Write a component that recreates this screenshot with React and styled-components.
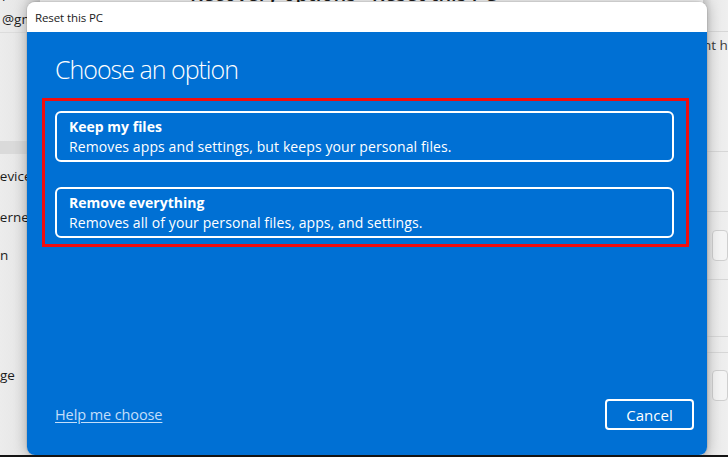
import React from 'react';
import styled, { createGlobalStyle } from 'styled-components';

const GlobalStyle = createGlobalStyle`
  html, body {
    margin: 0;
    padding: 0;
    background: #ededed;
    overflow: hidden;
  }
  body {
    font-family: "Open Sans", "Noto Sans", sans-serif;
  }
`;

const Screen = styled.div`
  position: relative;
  width: 728px;
  height: 457px;
  box-sizing: border-box;
  overflow: hidden;
  background: #ececec;
  border-bottom: 2px solid #141414;
`;

/* settings window that sits behind the dialog */
const Backdrop = styled.div`
  display: grid;
  grid-template-columns: 40px 663px 25px;
  height: 100%;
  color: #1b1b1b;
  font-size: 13.5px;
`;

const Sidebar = styled.div`
  display: flex;
  flex-direction: column;
  background: linear-gradient(90deg, #ececec 0%, #e6e6e6 60%, #cfcfcf 100%);
`;

const SideItem = styled.div`
  height: ${(p) => p.$h}px;
  display: flex;
  align-items: ${(p) => (p.$cut ? 'flex-end' : 'center')};
  overflow: hidden;
  white-space: nowrap;
  line-height: 20px;
  padding-left: 2px;
  background: ${(p) => (p.$active ? '#dadada' : 'transparent')};
  border-top: ${(p) => (p.$line ? '1px solid #dcdcdc' : 'none')};
`;

const SideLabel = styled.span`
  margin-left: ${(p) => p.$shift || 0}px;
`;

const Middle = styled.div`
  background: #f7f7f7;
`;

const TopText = styled.div`
  height: 2px;
  overflow: hidden;
  display: flex;
  align-items: flex-end;
  padding-left: 150px;
  line-height: 16px;
  font-size: 20px;
  font-weight: 600;
  white-space: nowrap;
`;

const RightCol = styled.div`
  display: flex;
  flex-direction: column;
  background: linear-gradient(90deg, #d2d2d2 0%, #e9e9e9 35%, #efefef 100%);
`;

const RightRow = styled.div`
  height: ${(p) => p.$h}px;
  box-sizing: border-box;
  display: flex;
  align-items: center;
  padding-left: ${(p) => p.$pad || 0}px;
  border-bottom: ${(p) => (p.$line ? '1px solid #d6d6d6' : 'none')};
  white-space: nowrap;
  overflow: hidden;
  color: #3a3a3a;
`;

const GhostButton = styled.div`
  width: 40px;
  height: 31px;
  box-sizing: border-box;
  border: 1px solid #cfcfcf;
  border-radius: 4px;
  background: #f4f4f4;
`;

/* the modal itself */
const Dialog = styled.div`
  position: absolute;
  left: 27px;
  top: 2px;
  width: 680px;
  height: 453px;
  display: flex;
  flex-direction: column;
  border-radius: 8px;
  overflow: hidden;
  box-shadow: 0 0 14px rgba(0, 0, 0, 0.28), 0 0 0 1px rgba(0, 0, 0, 0.06);
`;

const TitleBar = styled.div`
  height: 30px;
  flex-shrink: 0;
  display: flex;
  align-items: center;
  padding-left: 8px;
  background: #ffffff;
  color: #1a1a1a;
  font-size: 11.5px;
  letter-spacing: -0.1px;
`;

const Body = styled.div`
  flex: 1;
  display: flex;
  flex-direction: column;
  padding: 21px 13px 25px 15px;
  background: #0070d4;
  color: #ffffff;
`;

const Heading = styled.h1`
  margin: 0 0 13px 13px;
  font-size: 25px;
  font-weight: 300;
  line-height: 32px;
  letter-spacing: -1px;
`;

const Highlight = styled.div`
  display: flex;
  flex-direction: column;
  gap: 25px;
  margin-right: 5px;
  padding: 10px 12px 6px 10px;
  border: 3px solid #f20d0d;
`;

const Option = styled.button`
  height: 51px;
  box-sizing: border-box;
  display: flex;
  flex-direction: column;
  justify-content: center;
  align-items: flex-start;
  padding: 1px 12px 0;
  border: 2px solid #ffffff;
  border-radius: 6px;
  background: transparent;
  color: #ffffff;
  font-family: inherit;
  font-size: 14px;
  line-height: 20px;
  text-align: left;
  cursor: pointer;
`;

const OptionTitle = styled.span`
  font-weight: 700;
`;

const OptionText = styled.span`
  font-weight: 400;
  letter-spacing: 0.1px;
`;

const Footer = styled.div`
  margin-top: auto;
  display: flex;
  align-items: center;
  justify-content: space-between;
  padding-left: 13px;
`;

const HelpLink = styled.a`
  color: #c3defa;
  font-size: 14.5px;
  letter-spacing: -0.1px;
  text-decoration: underline;
  text-underline-offset: 2px;
  cursor: pointer;
`;

const CancelButton = styled.button`
  width: 89px;
  height: 31px;
  border: 2px solid #ffffff;
  border-radius: 4px;
  background: transparent;
  color: #ffffff;
  font-family: inherit;
  font-size: 15px;
  cursor: pointer;
`;

const options = [
  { title: 'Keep my files', text: 'Removes apps and settings, but keeps your personal files.' },
  { title: 'Remove everything', text: 'Removes all of your personal files, apps, and settings.' },
];

export default function App() {
  return (
    <>
      <GlobalStyle />
      <Screen>
        <Backdrop>
          <Sidebar>
            <SideItem $h={6} $cut>r</SideItem>
            <SideItem $h={26}>@gmail.com</SideItem>
            <SideItem $h={108} $line />
            <SideItem $h={13} $active />
            <SideItem $h={44}><SideLabel $shift={-12}>Devices</SideLabel></SideItem>
            <SideItem $h={37}><SideLabel $shift={-19}>Internet</SideLabel></SideItem>
            <SideItem $h={40}><SideLabel $shift={-2}>n</SideLabel></SideItem>
            <SideItem $h={80} />
            <SideItem $h={40}><SideLabel $shift={-2}>ge</SideLabel></SideItem>
          </Sidebar>
          <Middle>
            <TopText>Recovery options  ·  Reset this PC</TopText>
          </Middle>
          <RightCol>
            <RightRow $h={32} $line />
            <RightRow $h={25}>nt h</RightRow>
            <RightRow $h={95} $line />
            <RightRow $h={60} $line />
            <RightRow $h={68} $line $pad={9}><GhostButton /></RightRow>
            <RightRow $h={57} $line />
            <RightRow $h={16} $line />
            <RightRow $h={64} $pad={9}><GhostButton /></RightRow>
          </RightCol>
        </Backdrop>

        <Dialog>
          <TitleBar>Reset this PC</TitleBar>
          <Body>
            <Heading>Choose an option</Heading>
            <Highlight>
              {options.map((o) => (
                <Option key={o.title}>
                  <OptionTitle>{o.title}</OptionTitle>
                  <OptionText>{o.text}</OptionText>
                </Option>
              ))}
            </Highlight>
            <Footer>
              <HelpLink>Help me choose</HelpLink>
              <CancelButton>Cancel</CancelButton>
            </Footer>
          </Body>
        </Dialog>
      </Screen>
    </>
  );
}
